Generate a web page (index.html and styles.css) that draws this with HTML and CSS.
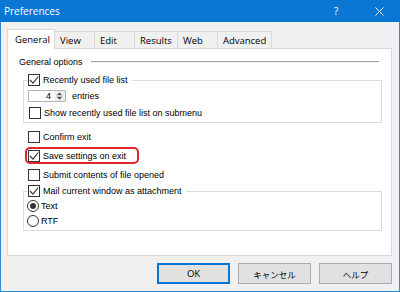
FILE: index.html
```html
<!DOCTYPE html>
<html>
<head>
<meta charset="utf-8">
<link rel="stylesheet" href="styles.css">
</head>
<body>
<div class="window">
  <div class="titlebar">
    <span class="title">Preferences</span>
    <span class="help">?</span>
    <span class="close"><svg width="9" height="9" viewBox="0 0 9 9"><path d="M0.5 0.5 L8.5 8.5 M8.5 0.5 L0.5 8.5" stroke="#fff" stroke-width="1"/></svg></span>
  </div>
  <div class="client">
    <div class="tabs">
      <div class="tab active">General</div>
      <div class="tab">View</div>
      <div class="tab">Edit</div>
      <div class="tab">Results</div>
      <div class="tab">Web</div>
      <div class="tab">Advanced</div>
    </div>
    <div class="panel">
      <div class="section-title"><span>General options</span><span class="rule"></span></div>
      <fieldset class="group g1">
        <legend class="opt"><span class="check on"><svg width="10" height="10" viewBox="0 0 10 10"><path d="M1 5 L4 8.2 L9.3 1.5" fill="none" stroke="#333" stroke-width="1.1"/></svg></span>Recently used file list</legend>
        <div class="spin-row">
          <div class="spin"><span class="val">4</span><span class="arrows"><svg width="9" height="10" viewBox="0 0 9 10"><path d="M2 4 L4.5 1.5 L7 4 Z M2 6 L7 6 L4.5 8.5 Z" fill="#444"/><path d="M1 5 H8" stroke="#bdbdbd" stroke-width="1"/></svg></span></div>
          <span class="label">entries</span>
        </div>
        <div class="opt sub"><span class="check"></span>Show recently used file list on submenu</div>
      </fieldset>
      <div class="opt confirm"><span class="check"></span>Confirm exit</div>
      <div class="opt hl"><span class="check on"><svg width="10" height="10" viewBox="0 0 10 10"><path d="M1 5 L4 8.2 L9.3 1.5" fill="none" stroke="#333" stroke-width="1.1"/></svg></span>Save settings on exit</div>
      <div class="opt submit"><span class="check"></span>Submit contents of file opened</div>
      <fieldset class="group g2">
        <legend class="opt"><span class="check on"><svg width="10" height="10" viewBox="0 0 10 10"><path d="M1 5 L4 8.2 L9.3 1.5" fill="none" stroke="#333" stroke-width="1.1"/></svg></span>Mail current window as attachment</legend>
        <div class="opt radio-row first"><span class="radio on"></span>Text</div>
        <div class="opt radio-row"><span class="radio"></span>RTF</div>
      </fieldset>
    </div>
    <div class="buttons">
      <div class="btn default">OK</div>
      <div class="btn jp">キャンセル</div>
      <div class="btn jp">ヘルプ</div>
    </div>
  </div>
</div>
</body>
</html>
```

FILE: styles.css
```css
html, body {
  margin: 0;
  padding: 0;
  background: #f0f0f0;
}
.window {
  width: 400px;
  height: 292px;
  box-sizing: border-box;
  border: 1px solid #2b87d9;
  border-top: none;
  background: #f0f0f0;
  display: flex;
  flex-direction: column;
  font-family: "Liberation Sans", Arial, sans-serif;
  font-size: 9px;
  color: #000;
}
.titlebar {
  height: 22px;
  margin: 0 -1px;
  background: #0a77d5;
  color: #fff;
  display: flex;
  align-items: center;
  font-family: "Open Sans", "Noto Sans", sans-serif;
  font-size: 10px;
  flex-shrink: 0;
}
.title {
  padding-left: 4px;
  flex: 1;
}
.help {
  font-size: 10px;
  width: 8px;
  margin-right: 33px;
}
.close {
  display: flex;
  margin-right: 16px;
}
.client {
  padding: 7px 7px 0 6px;
  display: flex;
  flex-direction: column;
}
.tabs {
  display: flex;
  align-items: flex-end;
  height: 20px;
  margin-bottom: -1px;
  position: relative;
  z-index: 1;
  font-family: "Open Sans", "Noto Sans", sans-serif;
  font-size: 9.5px;
}
.tab {
  height: 17px;
  box-sizing: border-box;
  min-width: 41px;
  padding: 0 5px;
  margin-bottom: 1px;
  border: 1px solid #d9d9d9;
  border-bottom: none;
  margin-left: -1px;
  background: #f0f0f0;
  display: flex;
  align-items: center;
  color: #000;
}
.tab.active {
  height: 20px;
  margin-bottom: 0;
  margin-left: 0;
  padding: 0 7px 1px 7px;
  background: #fff;
  width: 48px;
  position: relative;
  z-index: 2;
}
.panel {
  height: 208px;
  box-sizing: border-box;
  border: 1px solid #d9d9d9;
  background: #fff;
  padding: 7px 9px 0 8px;
  display: flex;
  flex-direction: column;
  align-items: flex-start;
}
.section-title {
  display: flex;
  align-items: center;
  height: 12px;
  padding-left: 3px;
  align-self: stretch;
  margin-right: 3px;
}
.rule {
  flex: 1;
  height: 0;
  border-top: 1px solid #a0a0a0;
  border-bottom: 1px solid #f4f4f4;
  margin-left: 8px;
}
.group {
  margin: 6px 0 0 7px;
  padding: 0 0 3px 4px;
  border: 1px solid #dcdcdc;
  align-self: stretch;
  min-width: 0;
}
.group legend {
  padding: 0 4px 0 0;
  margin: 0;
}
.opt {
  display: flex;
  align-items: center;
  height: 12px;
  line-height: 12px;
  white-space: nowrap;
}
.check {
  width: 12px;
  height: 12px;
  box-sizing: border-box;
  border: 1px solid #333;
  background: #fff;
  margin-right: 3px;
  display: flex;
  align-items: center;
  justify-content: center;
  flex-shrink: 0;
}
.radio {
  width: 12px;
  height: 12px;
  box-sizing: border-box;
  border: 1px solid #333;
  border-radius: 50%;
  background: #fff;
  margin-right: 2px;
  display: flex;
  align-items: center;
  justify-content: center;
  flex-shrink: 0;
}
.radio.on::after {
  content: "";
  width: 6px;
  height: 6px;
  border-radius: 50%;
  background: #333;
}
.spin-row {
  display: flex;
  align-items: center;
  margin-top: 4px;
  height: 12px;
}
.spin {
  width: 38px;
  height: 12px;
  box-sizing: border-box;
  border: 1px solid #b5b5b5;
  background: #fff;
  display: flex;
  align-items: center;
  justify-content: flex-end;
  margin-right: 6px;
}
.val {
  padding-right: 4px;
}
.arrows {
  width: 10px;
  height: 10px;
  display: flex;
  background: #ececec;
}
.sub {
  margin-top: 5px;
  margin-left: 1px;
}
.confirm {
  margin: 8px 0 0 12px;
}
.hl {
  margin: 4px 0 0 9px;
  height: 17px;
  box-sizing: border-box;
  padding: 0 11px 0 1px;
  border: 2px solid #e0262d;
  border-radius: 5px;
}
.submit {
  margin: 5px 0 0 12px;
}
.g2 {
  margin-top: 4px;
}
.radio-row {
  margin-top: 3px;
  margin-left: -1px;
}
.buttons {
  display: flex;
  justify-content: flex-end;
  gap: 8px;
  margin-top: 7px;
}
.btn {
  width: 73px;
  height: 21px;
  box-sizing: border-box;
  border: 1px solid #adadad;
  background: #e1e1e1;
  display: flex;
  align-items: center;
  justify-content: center;
  font-family: "Open Sans", "Noto Sans", sans-serif;
  font-size: 9.5px;
  color: #000;
}
.btn.default {
  border: 2px solid #0078d7;
}
.btn.jp {
  font-family: "Noto Sans CJK JP", sans-serif;
  font-size: 8.5px;
}
```
